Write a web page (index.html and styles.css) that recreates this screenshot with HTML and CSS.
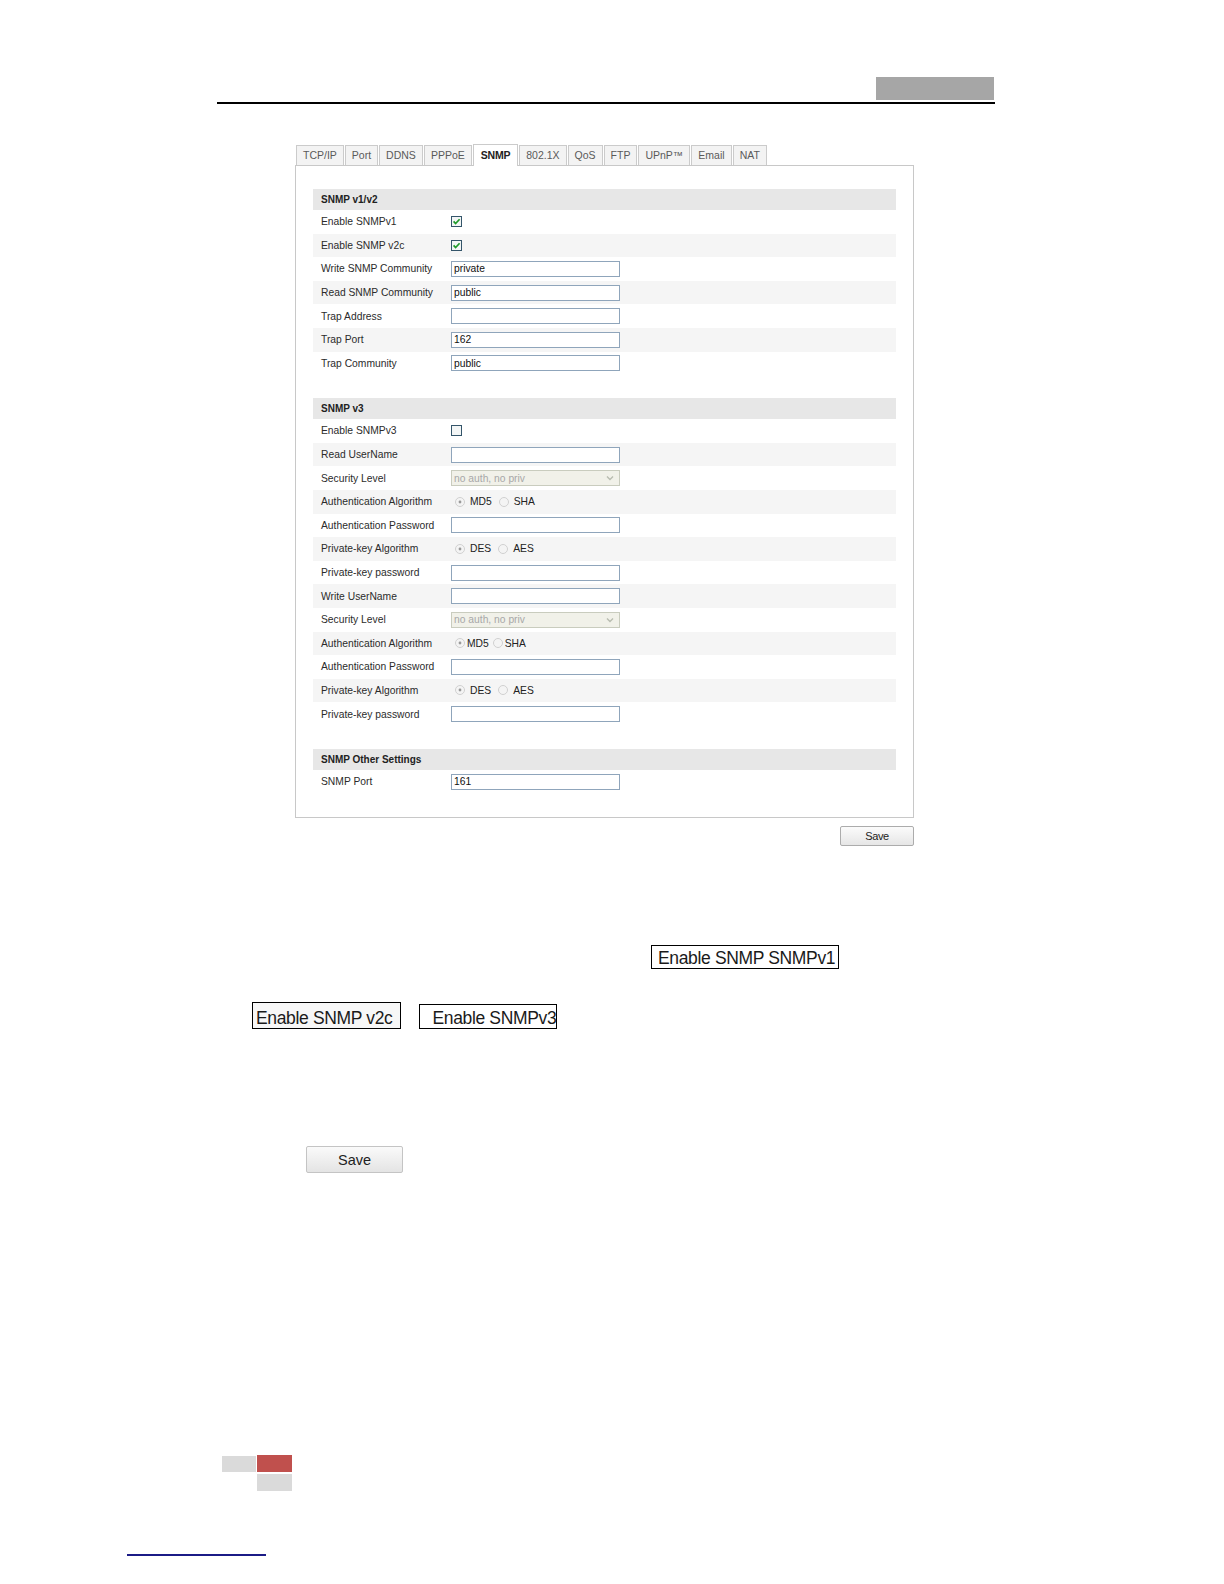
FILE: index.html
```html
<!DOCTYPE html>
<html lang="en">
<head>
  <meta charset="UTF-8">
  <meta name="viewport" content="width=device-width, initial-scale=1.0">
  <title>SNMP Settings</title>
  <link rel="stylesheet" href="styles.css">
</head>
<body>
  <div class="page">
    <div class="page_head">
      <div class="head_tag"></div>
    </div>

    <div class="shot">
      <div class="tabs">
        <div class="tab">TCP/IP</div>
        <div class="tab">Port</div>
        <div class="tab">DDNS</div>
        <div class="tab">PPPoE</div>
        <div class="tab tab_active">SNMP</div>
        <div class="tab">802.1X</div>
        <div class="tab">QoS</div>
        <div class="tab">FTP</div>
        <div class="tab">UPnP™</div>
        <div class="tab">Email</div>
        <div class="tab">NAT</div>
      </div>

      <div class="panel">
        <div class="section">
          <div class="section_head">SNMP v1/v2</div>
          <div class="row">
            <label>Enable SNMPv1</label>
            <svg class="check" width="11" height="11" viewBox="0 0 11 11"><rect x="0.5" y="0.5" width="10" height="10" fill="#f3f6f6" stroke="#34556a"/><path d="M2.6 5.4 L4.6 7.6 L8.6 3.2" stroke="#1f9a2a" stroke-width="1.7" fill="none"/></svg>
          </div>
          <div class="row">
            <label>Enable SNMP v2c</label>
            <svg class="check" width="11" height="11" viewBox="0 0 11 11"><rect x="0.5" y="0.5" width="10" height="10" fill="#f3f6f6" stroke="#34556a"/><path d="M2.6 5.4 L4.6 7.6 L8.6 3.2" stroke="#1f9a2a" stroke-width="1.7" fill="none"/></svg>
          </div>
          <div class="row">
            <label>Write SNMP Community</label>
            <input class="field" type="text" value="private">
          </div>
          <div class="row">
            <label>Read SNMP Community</label>
            <input class="field" type="text" value="public">
          </div>
          <div class="row">
            <label>Trap Address</label>
            <input class="field" type="text" value="">
          </div>
          <div class="row">
            <label>Trap Port</label>
            <input class="field" type="text" value="162">
          </div>
          <div class="row">
            <label>Trap Community</label>
            <input class="field" type="text" value="public">
          </div>
        </div>

        <div class="section">
          <div class="section_head">SNMP v3</div>
          <div class="row">
            <label>Enable SNMPv3</label>
            <svg class="check" width="11" height="11" viewBox="0 0 11 11"><rect x="0.5" y="0.5" width="10" height="10" fill="#f3f6f6" stroke="#34556a"/></svg>
          </div>
          <div class="row">
            <label>Read UserName</label>
            <input class="field" type="text" value="">
          </div>
          <div class="row">
            <label>Security Level</label>
            <div class="select_box">
              <span>no auth, no priv</span>
              <svg width="12" height="12" viewBox="0 0 12 12"><path d="M3 4.5 L6 7.5 L9 4.5" stroke="#b8bcb0" stroke-width="1.4" fill="none"/></svg>
            </div>
          </div>
          <div class="row">
            <label>Authentication Algorithm</label>
            <div class="radio_group">
              <svg class="radio" width="10" height="10" viewBox="0 0 10 10"><circle cx="5" cy="5" r="4.5" fill="#f4f4f4" stroke="#d0d0d0"/><circle cx="5" cy="5" r="1.4" fill="#9a9a9a"/></svg>
              <span class="opt">MD5</span>
              <svg class="radio" width="10" height="10" viewBox="0 0 10 10"><circle cx="5" cy="5" r="4.5" fill="#f4f4f4" stroke="#d0d0d0"/></svg>
              <span class="opt">SHA</span>
            </div>
          </div>
          <div class="row">
            <label>Authentication Password</label>
            <input class="field" type="text" value="">
          </div>
          <div class="row">
            <label>Private-key Algorithm</label>
            <div class="radio_group">
              <svg class="radio" width="10" height="10" viewBox="0 0 10 10"><circle cx="5" cy="5" r="4.5" fill="#f4f4f4" stroke="#d0d0d0"/><circle cx="5" cy="5" r="1.4" fill="#9a9a9a"/></svg>
              <span class="opt">DES</span>
              <svg class="radio" width="10" height="10" viewBox="0 0 10 10"><circle cx="5" cy="5" r="4.5" fill="#f4f4f4" stroke="#d0d0d0"/></svg>
              <span class="opt">AES</span>
            </div>
          </div>
          <div class="row">
            <label>Private-key password</label>
            <input class="field" type="text" value="">
          </div>
          <div class="row">
            <label>Write UserName</label>
            <input class="field" type="text" value="">
          </div>
          <div class="row">
            <label>Security Level</label>
            <div class="select_box">
              <span>no auth, no priv</span>
              <svg width="12" height="12" viewBox="0 0 12 12"><path d="M3 4.5 L6 7.5 L9 4.5" stroke="#b8bcb0" stroke-width="1.4" fill="none"/></svg>
            </div>
          </div>
          <div class="row">
            <label>Authentication Algorithm</label>
            <div class="radio_group">
              <svg class="radio" width="10" height="10" viewBox="0 0 10 10"><circle cx="5" cy="5" r="4.5" fill="#f4f4f4" stroke="#d0d0d0"/><circle cx="5" cy="5" r="1.4" fill="#9a9a9a"/></svg>
              <span class="opt opt_tight">MD5</span>
              <svg class="radio" width="10" height="10" viewBox="0 0 10 10"><circle cx="5" cy="5" r="4.5" fill="#f4f4f4" stroke="#d0d0d0"/></svg>
              <span class="opt opt_tight">SHA</span>
            </div>
          </div>
          <div class="row">
            <label>Authentication Password</label>
            <input class="field" type="text" value="">
          </div>
          <div class="row">
            <label>Private-key Algorithm</label>
            <div class="radio_group">
              <svg class="radio" width="10" height="10" viewBox="0 0 10 10"><circle cx="5" cy="5" r="4.5" fill="#f4f4f4" stroke="#d0d0d0"/><circle cx="5" cy="5" r="1.4" fill="#9a9a9a"/></svg>
              <span class="opt">DES</span>
              <svg class="radio" width="10" height="10" viewBox="0 0 10 10"><circle cx="5" cy="5" r="4.5" fill="#f4f4f4" stroke="#d0d0d0"/></svg>
              <span class="opt">AES</span>
            </div>
          </div>
          <div class="row">
            <label>Private-key password</label>
            <input class="field" type="text" value="">
          </div>
        </div>

        <div class="section section_last">
          <div class="section_head">SNMP Other Settings</div>
          <div class="row row_plain">
            <label>SNMP Port</label>
            <input class="field" type="text" value="161">
          </div>
        </div>
      </div>

      <div class="save_row">
        <button class="save_btn" type="button">Save</button>
      </div>
    </div>

    <div class="doc_text">
      <div class="doc_line doc_line_first">
        <span class="ui_box">Enable SNMP SNMPv1</span>
      </div>
      <div class="doc_line doc_line_second">
        <span class="ui_box ui_box_v2c">Enable SNMP v2c</span>
        <span class="ui_box ui_box_v3">Enable SNMPv3</span>
      </div>
      <div class="doc_line doc_line_save">
        <span class="doc_save">Save</span>
      </div>
    </div>

    <div class="page_foot">
      <div class="foot_block foot_gray_left"></div>
      <div class="foot_block foot_red"></div>
      <div class="foot_block foot_gray_bottom"></div>
    </div>

    <div class="foot_link"></div>
  </div>
</body>
</html>
```

FILE: styles.css
```css
* {
  font-family: "Liberation Sans", Arial, Helvetica, sans-serif;
  box-sizing: border-box;
}
body {
  margin: 0;
  background: #ffffff;
}
.page {
  width: 1224px;
  height: 1584px;
  overflow: hidden;
}

/* running header */
.page_head {
  display: flex;
  justify-content: flex-end;
  margin-left: 217px;
  width: 778px;
  padding-top: 77px;
  border-bottom: 2px solid #000;
}
.head_tag {
  width: 118px;
  height: 23px;
  margin-right: 1px;
  margin-bottom: 2px;
  background: #a6a6a6;
}

/* screenshot of the web config */
.shot {
  margin-left: 295px;
  margin-top: 41px;
  width: 619px;
}
.tabs {
  display: flex;
  align-items: flex-end;
  height: 20px;
  padding-left: 1px;
}
.tab {
  height: 20px;
  line-height: 19px;
  padding: 0 6px;
  margin-right: 1px;
  font-size: 10.5px;
  color: #5a5a5a;
  background: #f3f3f3;
  border: 1px solid #cbcbcb;
  border-bottom: none;
}
.tab_active {
  position: relative;
  z-index: 1;
  height: 22px;
  margin-bottom: -1px;
  line-height: 21px;
  padding: 0 7px;
  background: #ffffff;
  color: #222;
  font-weight: bold;
  letter-spacing: -0.2px;
}
.panel {
  border: 1px solid #c8c8c8;
  padding: 23px 17px 24px 17px;
}
.section {
  margin-bottom: 23px;
}
.section_last {
  margin-bottom: 0;
}
.section_head {
  height: 21px;
  line-height: 21px;
  padding-left: 8px;
  font-size: 10px;
  font-weight: bold;
  color: #222;
  background: #e7e7e7;
}
.row {
  display: flex;
  align-items: center;
  height: 23.6px;
}
.row:nth-child(odd) {
  background: #f5f5f5;
}
.row_plain {
  background: #ffffff !important;
}
.row label {
  width: 138px;
  padding-left: 8px;
  font-size: 10.3px;
  color: #2b2b2b;
}
.check {
  display: block;
}
.field {
  width: 169px;
  height: 16px;
  margin: 0;
  padding: 0 2px;
  border: 1px solid #8fa5bb;
  border-radius: 0;
  outline: none;
  background: #ffffff;
  font-size: 10.3px;
  color: #111;
}
.select_box {
  display: flex;
  align-items: center;
  justify-content: space-between;
  width: 169px;
  height: 16px;
  padding: 0 3px 0 2px;
  border: 1px solid #c9ccbe;
  background: #f1f1e9;
  font-size: 10.3px;
  color: #a8a8a8;
}
.select_box svg {
  display: block;
}
.radio_group {
  display: flex;
  align-items: center;
  padding-left: 4px;
}
.radio {
  display: block;
}
.opt {
  font-size: 10.3px;
  color: #222;
  margin: 0 7px 0 5px;
}
.opt_tight {
  margin: 0 4px 0 2px;
}
.save_row {
  display: flex;
  justify-content: flex-end;
  margin-top: 8px;
}
.save_btn {
  width: 74px;
  height: 20px;
  margin: 0;
  padding: 0;
  border: 1px solid #acacac;
  border-radius: 2px;
  background: linear-gradient(#fbfbfb, #e6e6e6);
  font-size: 11px;
  letter-spacing: -0.4px;
  color: #222;
}

/* manual text with inline UI labels */
.doc_line {
  display: flex;
  align-items: flex-end;
}
.doc_line_first {
  margin-top: 99px;
  padding-left: 651px;
}
.doc_line_second {
  margin-top: 33px;
  padding-left: 252px;
}
.ui_box {
  display: block;
  height: 24px;
  line-height: 24px;
  padding: 0 3px 0 6px;
  border: 1px solid #000;
  font-size: 17.5px;
  letter-spacing: -0.35px;
  color: #1a1a1a;
}
.ui_box_v2c {
  height: 27px;
  line-height: 30px;
  padding: 0 8px 0 3px;
  background: #f7f7f7;
}
.ui_box_v3 {
  height: 25px;
  line-height: 27px;
  margin-left: 18px;
  padding: 0 0 0 12px;
}
.doc_line_save {
  margin-top: 117px;
  padding-left: 306px;
}
.doc_save {
  display: block;
  width: 97px;
  height: 27px;
  line-height: 27px;
  text-align: center;
  border: 1px solid #c4c4c4;
  border-radius: 2px;
  background: linear-gradient(#fafafa, #e4e4e4);
  font-size: 14.5px;
  color: #222;
}

/* page footer */
.page_foot {
  display: grid;
  grid-template-columns: 34px 35px;
  grid-template-rows: 17px 17px;
  column-gap: 1px;
  row-gap: 2px;
  margin-top: 282px;
  margin-left: 222px;
}
.foot_gray_left {
  margin-top: 1px;
  background: #dadada;
}
.foot_red {
  background: #c0504d;
}
.foot_gray_bottom {
  grid-column: 2;
  background: #dadada;
}
.foot_link {
  width: 139px;
  margin-top: 63px;
  margin-left: 127px;
  border-bottom: 2px solid #1b1b86;
}
```
